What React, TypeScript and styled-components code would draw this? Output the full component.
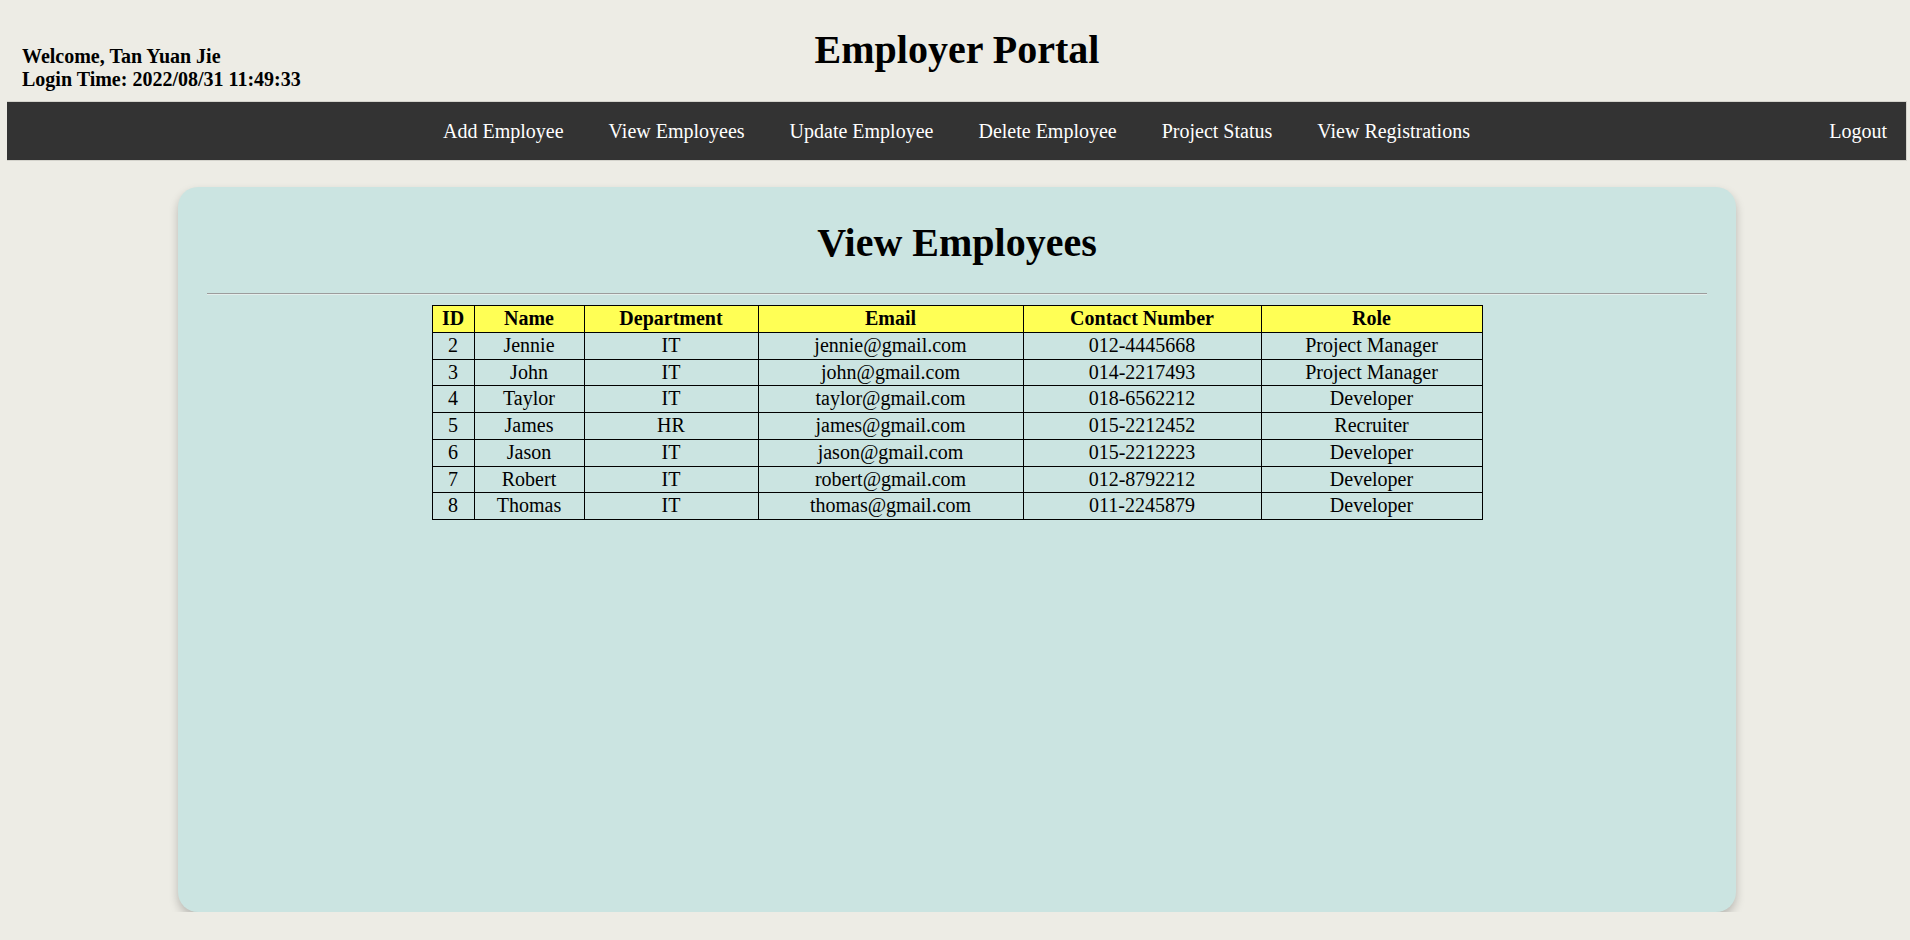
import React from 'react';
import styled, { createGlobalStyle } from 'styled-components';

const GlobalStyle = createGlobalStyle`
  body {
    margin: 0;
    background-color: #edece5;
    font-family: "Liberation Serif", "Times New Roman", serif;
    color: #000;
  }
`;

const Page = styled.div`
  padding: 0 3px 0 7px;
`;

const Header = styled.header`
  height: 101px;
  display: grid;
  grid-template-columns: 1fr auto 1fr;
  align-items: start;
`;

const UserInfo = styled.div`
  padding: 45px 0 0 15px;
  font-size: 20px;
  font-weight: bold;
  line-height: 23px;
`;

const Title = styled.h1`
  margin: 27px 0 0;
  font-size: 40px;
  line-height: 46px;
  font-weight: bold;
  text-align: center;
`;

const NavBar = styled.nav`
  height: 58px;
  background-color: #333333;
  border: 1px solid #d4d3cc;
  border-left: none;
  display: grid;
  grid-template-columns: 1fr auto 1fr;
  align-items: center;
`;

const NavLinks = styled.div`
  grid-column: 2;
  display: flex;
  gap: 5px;
`;

const NavLink = styled.a<{ $end?: boolean }>`
  color: #ffffff;
  font-size: 20px;
  line-height: 23px;
  padding: 0 20px;
  text-decoration: none;
  cursor: pointer;
  justify-self: ${(p) => (p.$end ? 'end' : 'auto')};
  padding-right: ${(p) => (p.$end ? '19px' : '20px')};
`;

const Card = styled.main`
  width: 82%;
  height: 725px;
  box-sizing: border-box;
  margin: 26px auto 0;
  padding: 30px 29px;
  background-color: #cbe4e1;
  border-radius: 20px;
  box-shadow: 0 5px 10px rgba(0, 0, 0, 0.22);
`;

const CardTitle = styled.h2`
  margin: 3px 0 0;
  font-size: 40px;
  line-height: 46px;
  font-weight: bold;
  text-align: center;
`;

const Divider = styled.hr`
  margin: 27px 0 10px;
  border: none;
  border-top: 1px solid #9c9c9c;
  border-bottom: 1px solid #e4eeec;
`;

const Table = styled.table`
  width: 1050px;
  margin: 0 auto;
  border-collapse: collapse;
  table-layout: fixed;
  font-size: 20px;
  text-align: center;
`;

const HeadCell = styled.th<{ $width: number }>`
  box-sizing: border-box;
  width: ${(p) => p.$width}px;
  background-color: #ffff55;
  border: 1px solid #000;
  padding: 1px 2px;
  line-height: 23.75px;
  font-weight: bold;
`;

const Cell = styled.td`
  border: 1px solid #000;
  padding: 1px 2px;
  line-height: 23.75px;
`;

interface Employee {
  id: number;
  name: string;
  department: string;
  email: string;
  contact: string;
  role: string;
}

const employees: Employee[] = [
  { id: 2, name: 'Jennie', department: 'IT', email: 'jennie@gmail.com', contact: '012-4445668', role: 'Project Manager' },
  { id: 3, name: 'John', department: 'IT', email: 'john@gmail.com', contact: '014-2217493', role: 'Project Manager' },
  { id: 4, name: 'Taylor', department: 'IT', email: 'taylor@gmail.com', contact: '018-6562212', role: 'Developer' },
  { id: 5, name: 'James', department: 'HR', email: 'james@gmail.com', contact: '015-2212452', role: 'Recruiter' },
  { id: 6, name: 'Jason', department: 'IT', email: 'jason@gmail.com', contact: '015-2212223', role: 'Developer' },
  { id: 7, name: 'Robert', department: 'IT', email: 'robert@gmail.com', contact: '012-8792212', role: 'Developer' },
  { id: 8, name: 'Thomas', department: 'IT', email: 'thomas@gmail.com', contact: '011-2245879', role: 'Developer' },
];

const navItems = [
  'Add Employee',
  'View Employees',
  'Update Employee',
  'Delete Employee',
  'Project Status',
  'View Registrations',
];

// column widths as measured in the reference table
const columns = [
  { label: 'ID', width: 42 },
  { label: 'Name', width: 110 },
  { label: 'Department', width: 174 },
  { label: 'Email', width: 265 },
  { label: 'Contact Number', width: 238 },
  { label: 'Role', width: 221 },
];

const App: React.FC = () => {
  return (
    <>
      <GlobalStyle />
      <Page>
        <Header>
          <UserInfo>
            Welcome, Tan Yuan Jie
            <br />
            Login Time: 2022/08/31 11:49:33
          </UserInfo>
          <Title>Employer Portal</Title>
        </Header>

        <NavBar>
          <NavLinks>
            {navItems.map((item) => (
              <NavLink key={item}>{item}</NavLink>
            ))}
          </NavLinks>
          <NavLink $end>Logout</NavLink>
        </NavBar>

        <Card>
          <CardTitle>View Employees</CardTitle>
          <Divider />
          <Table>
            <thead>
              <tr>
                {columns.map((col) => (
                  <HeadCell key={col.label} $width={col.width}>
                    {col.label}
                  </HeadCell>
                ))}
              </tr>
            </thead>
            <tbody>
              {employees.map((emp) => (
                <tr key={emp.id}>
                  <Cell>{emp.id}</Cell>
                  <Cell>{emp.name}</Cell>
                  <Cell>{emp.department}</Cell>
                  <Cell>{emp.email}</Cell>
                  <Cell>{emp.contact}</Cell>
                  <Cell>{emp.role}</Cell>
                </tr>
              ))}
            </tbody>
          </Table>
        </Card>
      </Page>
    </>
  );
};

export default App;
